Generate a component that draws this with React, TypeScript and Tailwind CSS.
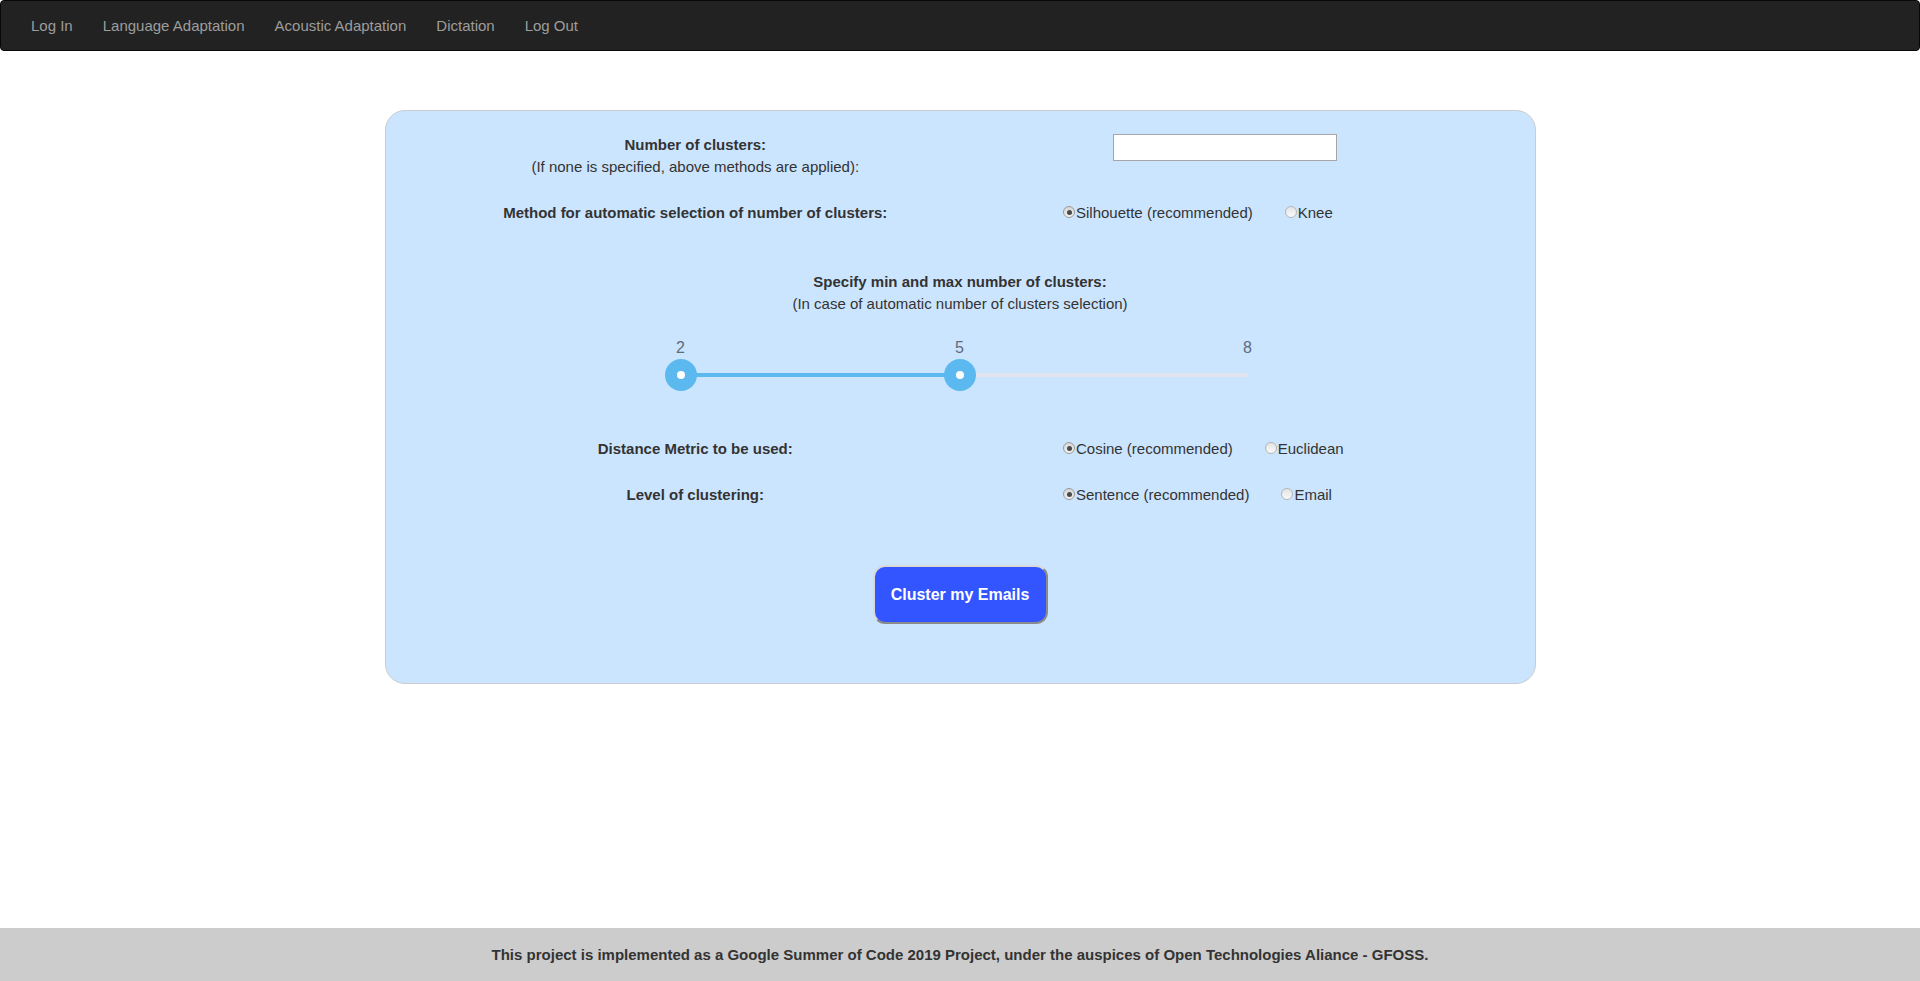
import React from "react";

const navLinks = ["Log In", "Language Adaptation", "Acoustic Adaptation", "Dictation", "Log Out"];

const Radio: React.FC<{ checked?: boolean; label: string; className?: string }> = ({ checked, label, className }) => {
  return (
    <label className={"flex items-center " + (className || "")}>
      <span
        className={
          "w-[12px] h-[12px] rounded-full border flex items-center justify-center mt-[-2px] " +
          (checked
            ? "border-[#9a9a9a] bg-gradient-to-b from-[#d6d6d6] to-[#f2f2f2]"
            : "border-[#b5b5b5] bg-gradient-to-b from-[#e4e4e4] to-[#fafafa]")
        }
      >
        {checked && <span className="w-[5px] h-[5px] rounded-full bg-[#4a4a4a]" />}
      </span>
      <span className="ml-[1px]">{label}</span>
    </label>
  );
};

const Row: React.FC<{ label: string; first: string; second: string; className?: string }> = ({ label, first, second, className }) => {
  return (
    <div className={"grid grid-cols-2 " + (className || "")}>
      <div className="text-center font-bold">{label}</div>
      <div className="flex pl-[103px]">
        <Radio checked label={first} />
        <Radio label={second} className="ml-[32px]" />
      </div>
    </div>
  );
};

const RangeSlider: React.FC = () => {
  return (
    <div className="relative w-[567px] h-[56px] ml-[250px] mt-[22px] text-[16px]">
      <span className="absolute left-0 top-0 -translate-x-1/2 text-[#5f6b7a] leading-[22px]">2</span>
      <span className="absolute left-[279px] top-0 -translate-x-1/2 text-[#5f6b7a] leading-[22px]">5</span>
      <span className="absolute right-0 top-0 translate-x-1/2 text-[#5f6b7a] leading-[22px]">8</span>
      <div className="absolute left-0 right-0 top-[36px] h-[4px] bg-[#dfe4ef]" />
      <div className="absolute left-0 w-[279px] top-[36px] h-[4px] bg-[#5cb9ef]" />
      <div className="absolute left-0 top-[22px] -translate-x-1/2 w-[32px] h-[32px] rounded-full bg-[#5cb9ef] flex items-center justify-center">
        <span className="w-[8px] h-[8px] rounded-full bg-white" />
      </div>
      <div className="absolute left-[279px] top-[22px] -translate-x-1/2 w-[32px] h-[32px] rounded-full bg-[#5cb9ef] flex items-center justify-center">
        <span className="w-[8px] h-[8px] rounded-full bg-white" />
      </div>
    </div>
  );
};

const App: React.FC = () => {
  return (
    <div className="min-h-screen flex flex-col bg-white text-[#333] text-[15px] leading-[22px] font-['Liberation_Sans',Arial,sans-serif]">
      <nav className="h-[51px] bg-[#222] border border-[#080808] rounded-[4px] flex items-center px-[15px]">
        {navLinks.map((l) => (
          <a key={l} className="px-[15px] text-[#9d9d9d] leading-[20px] cursor-pointer">
            {l}
          </a>
        ))}
      </nav>

      <main className="flex-1">
        <div className="w-[1151px] mx-auto mt-[59px] bg-[#cce5ff] border border-[#c9ccd1] rounded-[20px] px-[45px] pt-[23px] pb-[59px]">
          <div className="grid grid-cols-2">
            <div className="text-center">
              <div className="font-bold">Number of clusters:</div>
              <div>(If none is specified, above methods are applied):</div>
            </div>
            <div className="flex justify-center">
              <input
                type="text"
                className="w-[224px] h-[27px] bg-white border border-[#a6a6a6] outline-none px-1"
              />
            </div>
          </div>

          <Row
            label="Method for automatic selection of number of clusters:"
            first="Silhouette (recommended)"
            second="Knee"
            className="mt-[24px]"
          />

          <div className="text-center mt-[47px]">
            <div className="font-bold">Specify min and max number of clusters:</div>
            <div>(In case of automatic number of clusters selection)</div>
          </div>

          <RangeSlider />

          <Row label="Distance Metric to be used:" first="Cosine (recommended)" second="Euclidean" className="mt-[45px]" />
          <Row label="Level of clustering:" first="Sentence (recommended)" second="Email" className="mt-[24px]" />

          <div className="flex justify-center mt-[59px]">
            <button className="w-[175px] h-[59px] rounded-[12px] bg-[#3355ff] text-white font-bold text-[16px] border-2 border-t-[#d9d9d9] border-l-[#d9d9d9] border-r-[#8a8a8a] border-b-[#8a8a8a]">
              Cluster my Emails
            </button>
          </div>
        </div>
      </main>

      <footer className="h-[53px] bg-[#ccc] flex items-center justify-center font-bold">
        This project is implemented as a Google Summer of Code 2019 Project, under the auspices of Open Technologies Aliance - GFOSS.
      </footer>
    </div>
  );
};

export default App;
